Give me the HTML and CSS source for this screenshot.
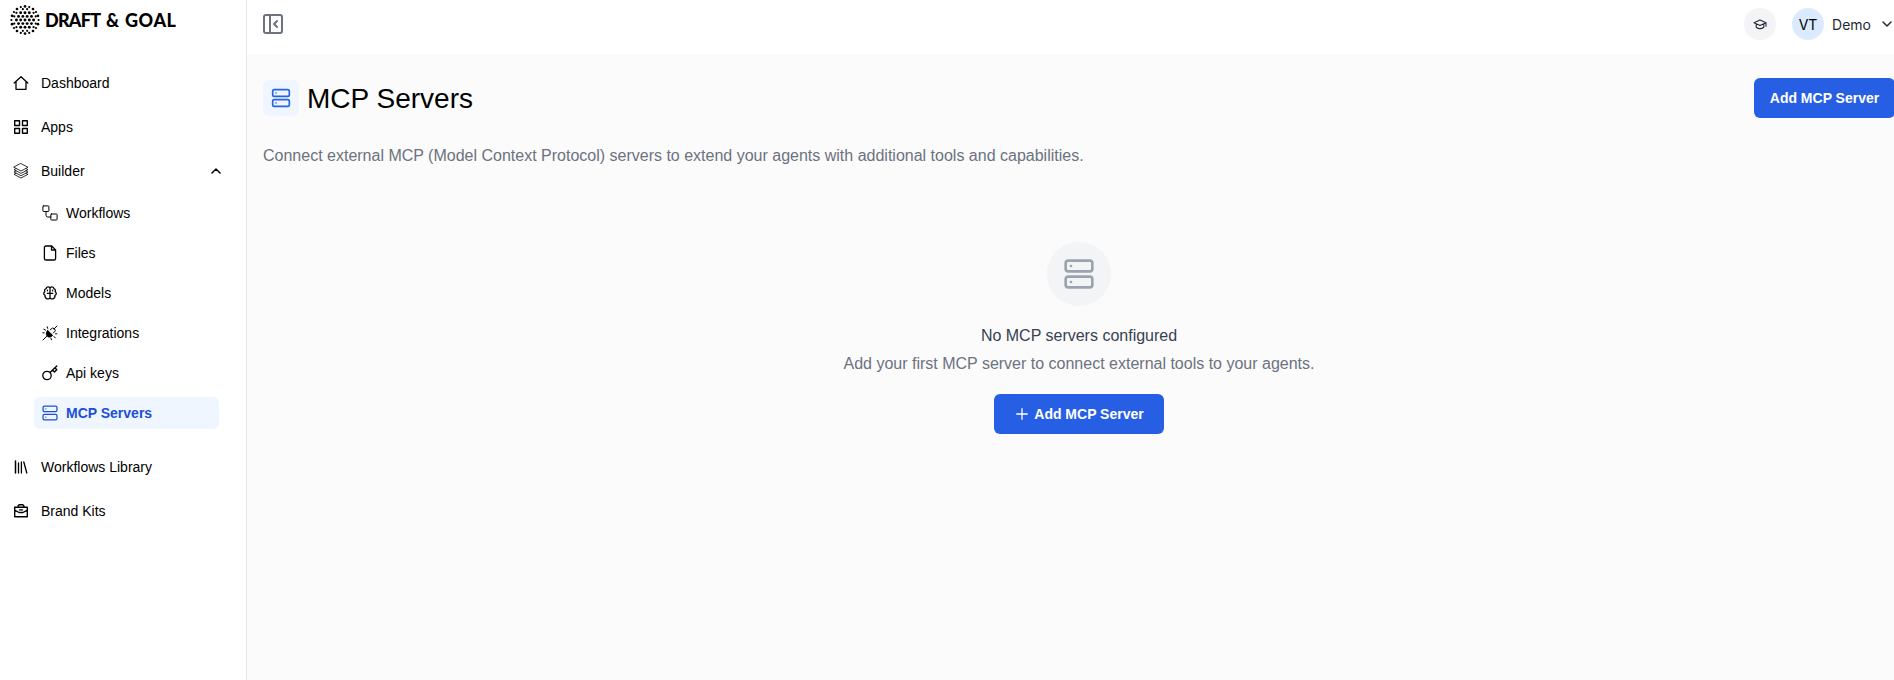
FILE: index.html
```
<!DOCTYPE html>
<html lang="en">
<head>
  <meta charset="UTF-8" />
  <meta name="viewport" content="width=device-width, initial-scale=1.0"/>
  <title>MCP Servers</title>
  <link rel="stylesheet" href="styles.css">
</head>
<body>
  <svg class="sprite" aria-hidden="true">
    <symbol id="icon-server" viewBox="0 0 24 24">
      <rect x="2" y="2" width="20" height="8" rx="2"/>
      <rect x="2" y="14" width="20" height="8" rx="2"/>
      <path d="M6 6h.01M6 18h.01"/>
    </symbol>
  </svg>

  <aside class="sidebar">
    <a class="logo" href="#">
      <svg class="logo-mark" viewBox="0 0 30 30" id="logo-mark"></svg>
      <svg class="logo-text" viewBox="0 0 140 28">
        <text x="0" y="21" textLength="56" lengthAdjust="spacing">DRAFT</text>
        <text x="61" y="21">&amp;</text>
        <text x="80" y="21" textLength="51" lengthAdjust="spacing">GOAL</text>
      </svg>
    </a>

    <nav class="nav">
      <a class="nav-item" href="#">
        <svg class="icon" viewBox="0 0 16 16"><path d="M1.2 8 8 1.7 14.8 8M3 6.6v7.7h10V6.6" stroke-width="1.3"/></svg>
        <span>Dashboard</span>
      </a>
      <a class="nav-item" href="#">
        <svg class="icon" viewBox="0 0 16 16"><path d="M1.7 1.7h4.8v4.8H1.7zM9.5 1.7h4.8v4.8H9.5zM1.7 9.5h4.8v4.8H1.7zM9.5 9.5h4.8v4.8H9.5z" stroke-width="1.4"/></svg>
        <span>Apps</span>
      </a>
      <a class="nav-item" href="#">
        <svg class="icon" viewBox="0 0 16 16"><path d="M8 .6 15 4.3 8 8 1 4.3zM3 5.6 1 6.7l7 3.7 7-3.7-2-1.1M3 8 1 9l7 3.7L15 9l-2-1M3 10.3l-2 1L8 15l7-3.7-2-1" stroke-width=".8"/></svg>
        <span>Builder</span>
        <svg class="icon chevron" viewBox="0 0 16 16"><path d="m4 10 4-4 4 4" stroke-width="1.5"/></svg>
      </a>

      <div class="subnav">
        <a class="subnav-item" href="#">
          <svg class="icon" viewBox="0 0 16 16"><rect x=".9" y=".9" width="6" height="5.6" rx=".7"/><rect x="8.8" y="9" width="6.3" height="6" rx=".7"/><path d="M4 6.5v3.7q0 1.8 1.8 1.8h3"/></svg>
          <span>Workflows</span>
        </a>
        <a class="subnav-item" href="#">
          <svg class="icon" viewBox="0 0 16 16"><path d="M9.7 1H4Q2.4 1 2.4 2.6v10.8Q2.4 15 4 15h8q1.6 0 1.6-1.6V4.9zM9.5 1v4h4.1" stroke-width="1.3"/></svg>
          <span>Files</span>
        </a>
        <a class="subnav-item" href="#">
          <svg class="icon" viewBox="0 0 16 16"><path d="M8 3.2C7.6 1.4 4.2 1.4 4.1 3.7 2.5 4.2 2.2 5.8 2.9 6.8 1.2 7.8 1.4 9.6 3 10.3c-.5 3.6 4.2 4.9 5 2.3.8 2.6 5.5 1.3 5-2.3 1.6-.7 1.8-2.5.1-3.5.7-1 .4-2.6-1.2-3.1C11.8 1.4 8.4 1.4 8 3.2zM8 3.2v9.4M5.2 8.3h5.6M5.4 5.2v.6M10.6 5.2v.6" stroke-width="1.3"/></svg>
          <span>Models</span>
        </a>
        <a class="subnav-item" href="#">
          <svg class="icon" viewBox="0 0 16 16"><path d="m1 15 4-4M12 4l3-3M8.2 4.8 10.4 3q2.8.2 3 2.8L11.4 8M5.2 1.8l.5 1.6M1.8 4.2l1.8 1M.8 7.8h1.4M9 13.4l.5 1.4M12 11.5l1.4 1.4M13.5 8.8h1.3"/><path d="m5.8 5.6 4.7 4.7c-1.2 2.1-3.6 2.3-5.1.9s-1.6-4 .4-5.6z" fill="currentColor"/></svg>
          <span>Integrations</span>
        </a>
        <a class="subnav-item" href="#">
          <svg class="icon" viewBox="0 0 16 16"><circle cx="5" cy="10.5" r="4.2" stroke-width="1.3"/><path d="m8 7.5 6.8-6.4M10.5 5l2 2.1 2.3-2.3-1.9-2" stroke-width="1.4"/></svg>
          <span>Api keys</span>
        </a>
        <a class="subnav-item active" href="#">
          <svg class="icon" viewBox=".5 .5 23 23" stroke-width="1.8"><use href="#icon-server" width="24" height="24"/></svg>
          <span>MCP Servers</span>
        </a>
      </div>

      <a class="nav-item" href="#">
        <svg class="icon" viewBox="0 0 16 16"><path d="M2.5 2v12" stroke-width="1.5"/><path d="M5.5 4v10M8.4 3v11M10.8 3l3 11" stroke-width="1.3"/></svg>
        <span>Workflows Library</span>
      </a>
      <a class="nav-item" href="#">
        <svg class="icon" viewBox="0 0 16 16"><path d="M1.7 4.2h12.6v9.6H1.7zM5.2 4V2.8l1-1.1h3.6l1 1.1V4M1.7 7.2 6 9.5h4l4.3-2.3M6.5 6.9h3" stroke-width="1.4"/></svg>
        <span>Brand Kits</span>
      </a>
    </nav>
  </aside>

  <div class="page">
    <header class="topbar">
      <button class="collapse-btn" aria-label="Collapse sidebar">
        <svg class="icon" viewBox="2 2 20 20" stroke-width="2"><rect x="3" y="3" width="18" height="18" rx="2"/><path d="M9 3v18M16 15l-3-3 3-3"/></svg>
      </button>
      <div class="user">
        <button class="learn-btn" aria-label="Learn">
          <svg class="icon" viewBox="0 0 16 16"><path d="M2 6.8 8 4l6 2.8-6 2.8zM4.2 8v3.2q3.8 2.8 7.6 0V8M14 6.8v3.4" stroke-width="1.1"/></svg>
        </button>
        <div class="avatar">VT</div>
        <span class="user-name">Demo</span>
        <svg class="icon user-chevron" viewBox="0 0 16 16"><path d="m4 6 4 4 4-4" stroke-width="1.5"/></svg>
      </div>
    </header>

    <main class="content">
      <div class="title-row">
        <div class="title-icon">
          <svg class="icon" viewBox="0 0 24 24" stroke-width="2"><use href="#icon-server"/></svg>
        </div>
        <h1>MCP Servers</h1>
        <button class="btn">Add MCP Server</button>
      </div>
      <p class="description">Connect external MCP (Model Context Protocol) servers to extend your agents with additional tools and capabilities.</p>

      <section class="empty">
        <div class="empty-icon">
          <svg class="icon" viewBox="0 0 24 24" stroke-width="2"><use href="#icon-server"/></svg>
        </div>
        <h2>No MCP servers configured</h2>
        <p>Add your first MCP server to connect external tools to your agents.</p>
        <button class="btn btn-wide">
          <svg class="icon" viewBox="0 0 16 16"><path d="M8 2.7v10.6M2.7 8h10.6" stroke-width="1.3"/></svg>
          Add MCP Server
        </button>
      </section>
    </main>
  </div>

  <script>
    // logo mark: a honeycomb of dots inside one outer ring
    let dots = '';
    const addDot = (x, y, r) => {
      dots += `<circle cx="${15 + x}" cy="${15 + y}" r="${r}"/>`;
    };

    for (let row = -3; row <= 3; row++) {
      for (let col = -3; col <= 3; col++) {
        const x = (col + (row % 2 ? 0.5 : 0)) * 4.3;
        const y = row * 3.6;
        const dist = Math.hypot(x, y);
        if (dist < 11.6) addDot(x, y, dist < 9 ? 1.45 : 1.1);
      }
    }
    for (let i = 0; i < 20; i++) {
      const a = i / 20 * Math.PI * 2;
      addDot(13.6 * Math.cos(a), 13.6 * Math.sin(a), i % 2 ? 1.35 : 1.1);
    }
    document.getElementById('logo-mark').innerHTML = dots;
  </script>
</body>
</html>
```
FILE: styles.css
```
* {
  box-sizing: border-box;
}

body {
  margin: 0;
  display: flex;
  height: 100vh;
  overflow: hidden;
  font-family: "Liberation Sans", Arial, sans-serif;
  font-size: 14px;
  color: #000;
  background-color: #fbfbfb;
}

a {
  color: inherit;
  text-decoration: none;
}

button {
  border: none;
  padding: 0;
  font-family: inherit;
  cursor: pointer;
}

h1, h2, p {
  margin: 0;
  font-weight: 400;
}

.sprite {
  display: none;
}

.icon {
  width: 16px;
  height: 16px;
  flex-shrink: 0;
  fill: none;
  stroke: currentColor;
  stroke-linecap: round;
  stroke-linejoin: round;
}

/* sidebar */
.sidebar {
  width: 247px;
  flex-shrink: 0;
  background-color: #fff;
  border-right: 1px solid #e5e7eb;
}

.logo {
  display: flex;
  align-items: center;
  gap: 5px;
  height: 40px;
  padding-left: 10px;
}

.logo-mark {
  width: 30px;
  height: 30px;
}

.logo-text {
  width: 140px;
  height: 28px;
  overflow: visible;
  font-family: Lato, sans-serif;
  font-size: 18px;
  font-weight: 900;
}

.nav {
  padding: 25px 27px 0 13px;
}

.nav-item {
  display: flex;
  align-items: center;
  gap: 12px;
  height: 36px;
  margin-bottom: 8px;
}

.chevron {
  margin-left: auto;
  margin-right: -5px;
}

.subnav {
  display: flex;
  flex-direction: column;
  gap: 8px;
  margin: 0 0 20px 21px;
}

.subnav-item {
  display: flex;
  align-items: center;
  gap: 8px;
  height: 32px;
  padding: 0 8px;
  border-radius: 6px;
}

.subnav-item.active {
  background-color: #eff6ff;
  color: #1d4ed8;
  font-weight: 700;
}

/* the content runs a little under the right edge */
.page {
  width: 1648px;
  flex-shrink: 0;
}

.topbar {
  display: flex;
  align-items: center;
  justify-content: space-between;
  height: 54px;
  padding: 0 0 6px 16px;
  background-color: #fff;
}

.collapse-btn {
  display: flex;
  background: none;
  color: #6b7280;
}

.collapse-btn .icon {
  width: 20px;
  height: 20px;
}

.user {
  display: flex;
  align-items: center;
  color: #1f2937;
}

.learn-btn,
.avatar {
  display: flex;
  align-items: center;
  justify-content: center;
  width: 32px;
  height: 32px;
  margin-right: 16px;
  border-radius: 50%;
  background-color: #f3f4f6;
  color: #1f2937;
}

.avatar {
  margin-right: 8px;
  background-color: #dbeafe;
  color: #000;
  font-family: Inter, sans-serif;
}

.user-name {
  font-family: Inter, sans-serif;
}

.user-chevron {
  margin-left: 8px;
}

.content {
  padding: 24px 0 0 16px;
}

.title-row {
  display: flex;
  align-items: center;
  gap: 8px;
}

.title-icon {
  display: flex;
  align-items: center;
  justify-content: center;
  width: 36px;
  height: 36px;
  border-radius: 6px;
  background-color: #eff6ff;
  color: #2563eb;
}

.title-icon .icon {
  width: 20px;
  height: 20px;
}

h1 {
  padding-top: 2px;
  font-size: 28px;
  line-height: 36px;
}

.btn {
  display: flex;
  align-items: center;
  justify-content: center;
  gap: 4px;
  width: 141px;
  height: 40px;
  border-radius: 6px;
  background-color: #275fe4;
  color: #fff;
  font-size: 14px;
  font-weight: 700;
}

.title-row .btn {
  margin-left: auto;
}

.description {
  margin-top: 26px;
  font-size: 16px;
  line-height: 24px;
  color: #6b7280;
}

.empty {
  display: flex;
  flex-direction: column;
  align-items: center;
  margin-top: 74px;
}

.empty-icon {
  display: flex;
  align-items: center;
  justify-content: center;
  width: 64px;
  height: 64px;
  border-radius: 50%;
  background-color: #f3f4f6;
  color: #9ca3af;
}

.empty-icon .icon {
  width: 32px;
  height: 32px;
}

.empty h2 {
  margin-top: 18px;
  font-size: 16px;
  line-height: 24px;
  color: #374151;
}

.empty p {
  margin: 4px 0 18px;
  font-size: 16px;
  line-height: 24px;
  color: #6b7280;
}

.btn-wide {
  width: 170px;
}
```
